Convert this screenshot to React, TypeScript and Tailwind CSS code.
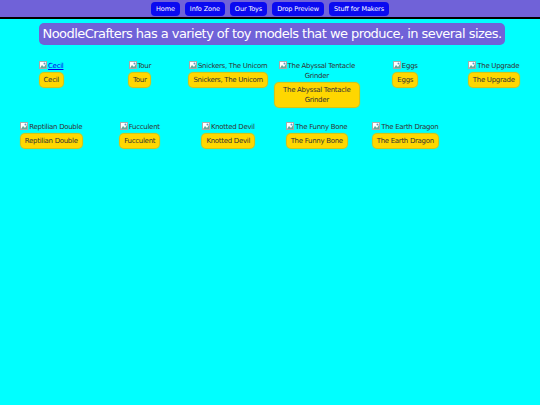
import React from 'react'

const NAV = ['Home', 'Info Zone', 'Our Toys', 'Drop Preview', 'Stuff for Makers']

const TOYS = [
  { name: 'Cecil', link: true },
  { name: 'Tour' },
  { name: 'Snickers, The Unicorn' },
  { name: 'The Abyssal Tentacle Grinder' },
  { name: 'Eggs' },
  { name: 'The Upgrade' },
  { name: 'Reptilian Double' },
  { name: 'Fucculent' },
  { name: 'Knotted Devil' },
  { name: 'The Funny Bone' },
  { name: 'The Earth Dragon' },
]

function BrokenImg() {
  return (
    <svg width="8" height="8" viewBox="0 0 8 8" className="inline-block mr-[1px] align-[-1px]">
      <rect x="0.5" y="0.5" width="7" height="7" fill="#fff" stroke="#aaa" />
      <path d="M1 7 L3 4 L5 6 L7 3 L7 7 Z" fill="#6a9" />
      <circle cx="5.5" cy="2.5" r="1" fill="#59c" />
    </svg>
  )
}

export default function App() {
  return (
    <div className="min-h-[405px] bg-[#00ffff] text-[#333]" style={{ fontFamily: '"Comic Sans MS", "DejaVu Sans", sans-serif' }}>
      <header className="flex justify-center gap-[5px] bg-[#7062d8] h-[19px] pt-[2px] border-b-2 border-black">
        {NAV.map((n) => (
          <a key={n} className="bg-[#0a0af0] text-white rounded-[4px] px-[5px] h-[14px] text-[6.5px] leading-[14px] tracking-[-0.1px]">{n}</a>
        ))}
      </header>
      <div className="flex justify-center pt-[4px] pl-[4px]">
        <h1 className="bg-[#7062d8] text-white rounded-[5px] px-[4px] h-[22px] text-[13px] leading-[22px] tracking-[-0.55px]">
          NoodleCrafters has a variety of toy models that we produce, in several sizes.
        </h1>
      </div>
      <div className="grid grid-cols-6 gap-x-[4px] gap-y-[15px] pl-[9px] pr-[4px] pt-[16px] tracking-[-0.3px]">
        {TOYS.map((t) => (
          <div key={t.name} className="flex flex-col items-center text-center">
            <div className="text-[7px] leading-[10px] px-[2px]">
              {t.link ? (
                <a className="text-[#0000ee] underline"><BrokenImg />{t.name}</a>
              ) : (
                <span><BrokenImg />{t.name}</span>
              )}
            </div>
            <div className="mt-[2px] bg-[#ffd700] rounded-[4px] px-[4px] py-[2px] text-[7px] leading-[10px] shadow-[0_0_1px_1px_#e8c000]">
              {t.name}
            </div>
          </div>
        ))}
      </div>
    </div>
  )
}
